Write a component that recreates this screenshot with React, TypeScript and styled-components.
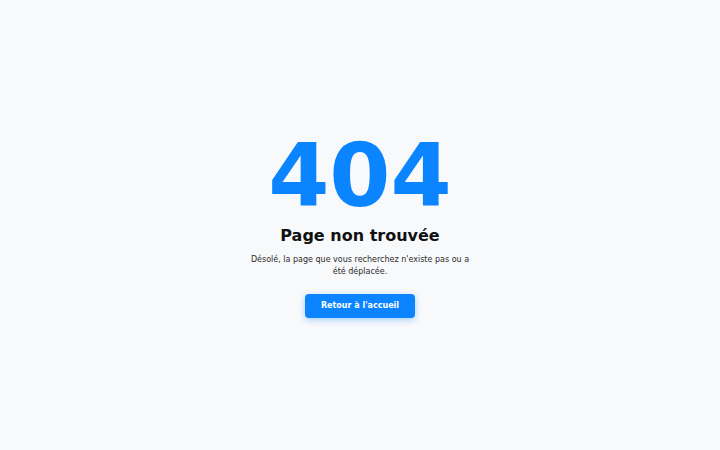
import React from "react"
import styled, { createGlobalStyle } from "styled-components"

const GlobalStyle = createGlobalStyle`
  html, body {
    margin: 0;
    padding: 0;
    height: 100%;
    background: #f8f9fb;
  }
  body {
    font-family: "DejaVu Sans", "Liberation Sans", sans-serif;
  }
  #root {
    height: 100%;
  }
`

const Page = styled.div`
  height: 100vh;
  display: flex;
  align-items: center;
  justify-content: center;
  background: #f8f9fb;
`

const Box = styled.div`
  display: flex;
  flex-direction: column;
  align-items: center;
  text-align: center;
`

const Code = styled.h1`
  margin: 0;
  font-size: 88px;
  line-height: 1;
  font-weight: 700;
  color: #0a84ff;
`

const Title = styled.h2`
  margin: 6px 0 0;
  font-size: 16px;
  line-height: 1.2;
  font-weight: 700;
  color: #111;
`

const Text = styled.p`
  margin: 8px 0 0;
  max-width: 225px;
  font-size: 8px;
  line-height: 12px;
  color: #2b2b2b;
`

const Button = styled.a`
  margin-top: 16px;
  display: inline-block;
  padding: 7px 16px;
  border-radius: 4px;
  background: #0a84ff;
  color: #fff;
  font-size: 8px;
  line-height: 10px;
  font-weight: 700;
  text-decoration: none;
  box-shadow: 0 2px 6px rgba(10, 132, 255, 0.35);
`

export default function App() {
  return (
    <>
      <GlobalStyle />
      <Page>
        <Box>
          <Code>404</Code>
          <Title>Page non trouvée</Title>
          <Text>Désolé, la page que vous recherchez n'existe pas ou a été déplacée.</Text>
          <Button href="#">Retour à l'accueil</Button>
        </Box>
      </Page>
    </>
  )
}
